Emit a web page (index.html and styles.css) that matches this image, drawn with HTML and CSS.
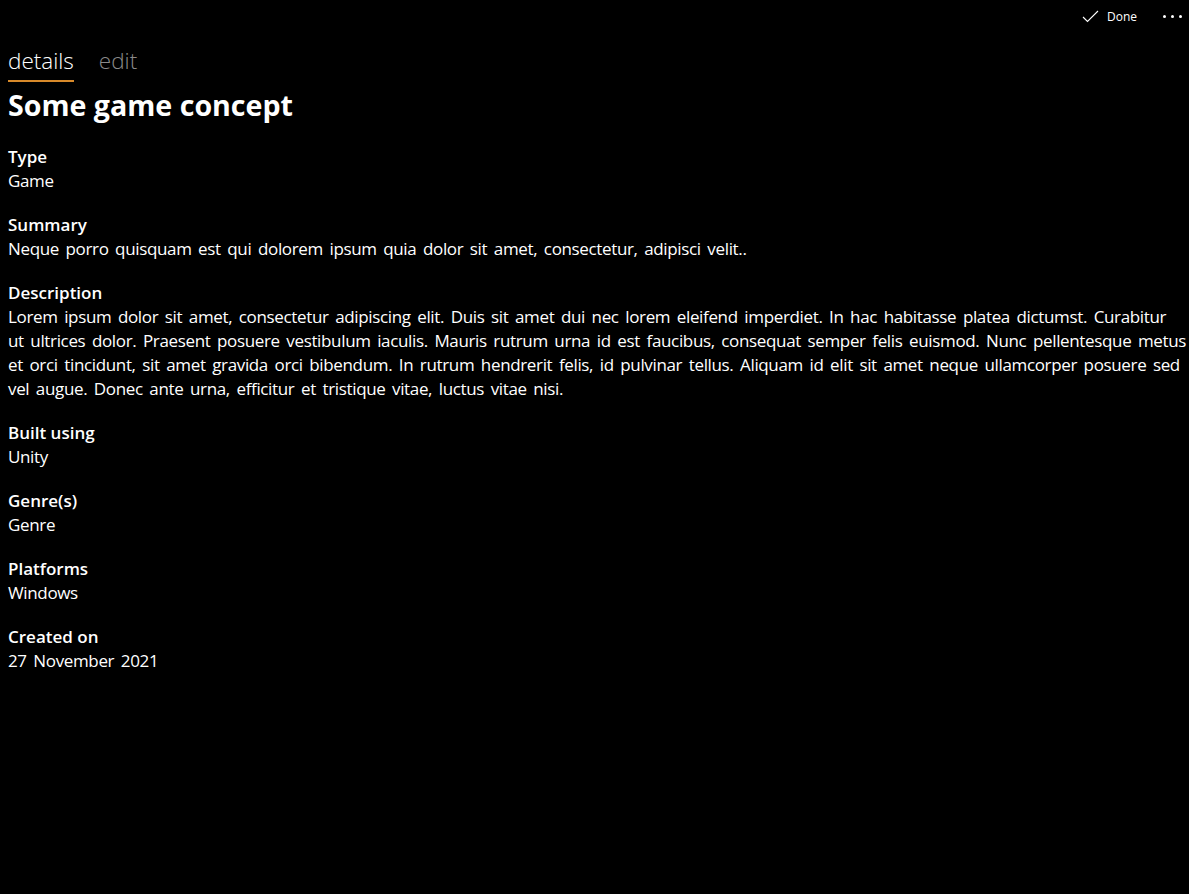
FILE: index.html
```html
<!DOCTYPE html>
<html>
<head>
<meta charset="utf-8">
<link rel="stylesheet" href="styles.css">
</head>
<body>
<div class="topbar">
  <button class="cmd">
    <svg class="check" width="17" height="13" viewBox="0 0 17 13"><path d="M1 7 L5.5 11.5 L16 1" fill="none" stroke="#fff" stroke-width="1.1"/></svg>
    <span>Done</span>
  </button>
  <button class="more"><span></span><span></span><span></span></button>
</div>
<div class="tabs">
  <div class="tab active">details</div>
  <div class="tab">edit</div>
</div>
<h1 class="title">Some game concept</h1>
<dl class="fields">
  <div class="field"><dt>Type</dt><dd>Game</dd></div>
  <div class="field"><dt>Summary</dt><dd>Neque porro quisquam est qui dolorem ipsum quia dolor sit amet, consectetur, adipisci velit..</dd></div>
  <div class="field"><dt>Description</dt><dd>Lorem ipsum dolor sit amet, consectetur adipiscing elit. Duis sit amet dui nec lorem eleifend imperdiet. In hac habitasse platea dictumst. Curabitur ut ultrices dolor. Praesent posuere vestibulum iaculis. Mauris rutrum urna id est faucibus, consequat semper felis euismod. Nunc pellentesque metus et orci tincidunt, sit amet gravida orci bibendum. In rutrum hendrerit felis, id pulvinar tellus. Aliquam id elit sit amet neque ullamcorper posuere sed vel augue. Donec ante urna, efficitur et tristique vitae, luctus vitae nisi.</dd></div>
  <div class="field"><dt>Built using</dt><dd>Unity</dd></div>
  <div class="field"><dt>Genre(s)</dt><dd>Genre</dd></div>
  <div class="field"><dt>Platforms</dt><dd>Windows</dd></div>
  <div class="field"><dt>Created on</dt><dd>27 November 2021</dd></div>
</dl>
</body>
</html>
```
FILE: styles.css
```css
html, body {
  margin: 0;
  padding: 0;
  background: #000;
  color: #fff;
  font-family: "Open Sans", "Noto Sans", sans-serif;
}
body {
  padding: 0 0 0 8px;
  min-height: 894px;
  box-sizing: border-box;
}
.topbar {
  display: flex;
  justify-content: flex-end;
  align-items: center;
  height: 32px;
}
.cmd {
  display: flex;
  align-items: center;
  gap: 8px;
  background: none;
  border: 0;
  color: #fff;
  font-family: inherit;
  font-size: 12px;
  padding: 0;
  margin-right: 26px;
}
.more {
  display: flex;
  gap: 5px;
  background: none;
  border: 0;
  padding: 0;
  margin-right: 7px;
  align-items: center;
  height: 32px;
}
.more span {
  width: 3px;
  height: 3px;
  background: #fff;
  border-radius: 50%;
}
.tabs {
  display: flex;
  gap: 25px;
  margin-top: 14px;
}
.tab {
  font-size: 22.5px;
  font-weight: 300;
  color: #8a8a8a;
  line-height: 30px;
  padding-bottom: 4px;
  border-bottom: 2px solid transparent;
}
.tab.active {
  color: #fff;
  border-bottom-color: #d88a2a;
}
.title {
  margin: 5px 0 22px;
  font-size: 28.6px;
  font-weight: 700;
  line-height: 36px;
}
.fields {
  margin: 0;
}
.field {
  margin-bottom: 20px;
}
.field dt {
  font-weight: 600;
  font-size: 17px;
  line-height: 24px;
}
.field dd {
  margin: 0;
  max-width: 1179.2px;
  font-size: 17px;
  line-height: 24px;
  word-spacing: 2.5px;
  letter-spacing: -0.35px;
}
```
